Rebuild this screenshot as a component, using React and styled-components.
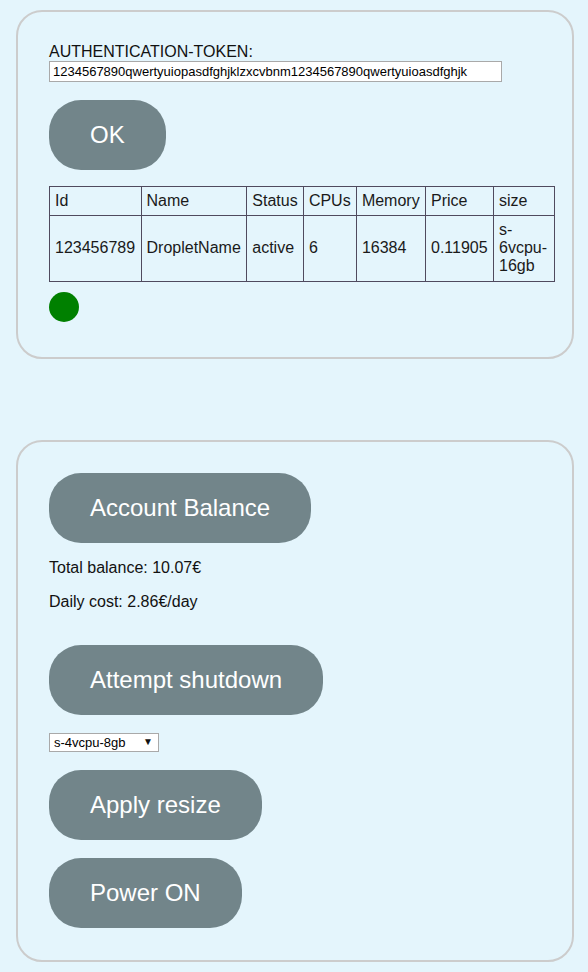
import React from "react";
import styled, { createGlobalStyle } from "styled-components";

const Global = createGlobalStyle`
  html, body { margin: 0; padding: 0; background: #e4f5fc; }
  body { font-family: "Liberation Sans", Arial, sans-serif; font-size: 16px; color: #000; }
`;

const Page = styled.div`
  display: flex;
  flex-direction: column;
  gap: 81px;
  padding: 10px 14px 10px 16px;
`;

const Card = styled.section`
  box-sizing: border-box;
  width: 558px;
  border: 2px solid #cccccc;
  border-radius: 26px;
  background: #e4f5fc;
  padding: 31px 17px ${(p) => p.$bottom || 32}px 31px;
  display: flex;
  flex-direction: column;
  align-items: flex-start;
`;

const Label = styled.div`
  font-size: 16px;
  line-height: 18px;
  color: #111;
`;

const TokenInput = styled.input`
  box-sizing: border-box;
  width: 453px;
  height: 21px;
  border: 1px solid #a9a9a9;
  background: #fff;
  font-family: "Liberation Sans", Arial, sans-serif;
  font-size: 13px;
  padding: 0 3px;
  color: #000;
  outline: none;
`;

const Button = styled.button`
  box-sizing: border-box;
  height: 70px;
  margin-top: ${(p) => p.$mt ?? 18}px;
  padding: 0 41px;
  border: none;
  border-radius: 32px;
  background: #72858a;
  color: #fff;
  font-family: "Liberation Sans", Arial, sans-serif;
  font-size: 24px;
  cursor: pointer;
`;

const Table = styled.table`
  margin-top: 16px;
  width: 506px;
  border-collapse: collapse;
  font-size: 16px;
  line-height: 18px;
  color: #1a1a1a;
`;

const Th = styled.th`
  border: 1px solid #4f4a5e;
  padding: 5px 5px;
  text-align: left;
  font-weight: normal;
`;

const Td = styled.td`
  border: 1px solid #4f4a5e;
  padding: 5px 5px 6px;
  text-align: left;
  vertical-align: middle;
  width: ${(p) => (p.$w ? `${p.$w}px` : "auto")};
`;

const Dot = styled.div`
  margin-top: 10px;
  width: 30px;
  height: 30px;
  border-radius: 50%;
  background: #008000;
`;

const Info = styled.p`
  margin: ${(p) => p.$mt}px 0 0;
  font-size: 16px;
  line-height: 18px;
  color: #111;
`;

const SelectWrap = styled.div`
  position: relative;
  margin-top: 18px;
  width: 110px;
  height: 19px;
`;

const Select = styled.select`
  box-sizing: border-box;
  width: 110px;
  height: 19px;
  border: 1px solid #a9a9a9;
  background: #fff;
  font-family: "Liberation Sans", Arial, sans-serif;
  font-size: 13px;
  padding: 0 0 0 4px;
  appearance: none;
  -webkit-appearance: none;
  border-radius: 0;
  color: #000;
  outline: none;
`;

const Arrow = styled.span`
  position: absolute;
  right: 6px;
  top: 3px;
  font-size: 10px;
  line-height: 12px;
  color: #111;
  pointer-events: none;
`;

const headers = ["Id", "Name", "Status", "CPUs", "Memory", "Price", "size"];
const row = ["123456789", "DropletName", "active", "6", "16384", "0.11905", "s-6vcpu-16gb"];

export default function App() {
  return (
    <>
      <Global />
      <Page>
        <Card $bottom={35}>
          <Label>AUTHENTICATION-TOKEN:</Label>
          <TokenInput
            defaultValue="1234567890qwertyuiopasdfghjklzxcvbnm1234567890qwertyuioasdfghjk"
          />
          <Button>OK</Button>
          <Table>
            <thead>
              <tr>
                {headers.map((h) => (
                  <Th key={h}>{h}</Th>
                ))}
              </tr>
            </thead>
            <tbody>
              <tr>
                {row.map((c, i) => (
                  <Td key={i} $w={i === 6 ? 50 : 0}>{c}</Td>
                ))}
              </tr>
            </tbody>
          </Table>
          <Dot />
        </Card>
        <Card>
          <Button $mt={0}>Account Balance</Button>
          <Info $mt={16}>Total balance: 10.07€</Info>
          <Info $mt={16}>Daily cost: 2.86€/day</Info>
          <Button $mt={34}>Attempt shutdown</Button>
          <SelectWrap>
            <Select defaultValue="s-4vcpu-8gb">
              <option>s-4vcpu-8gb</option>
              <option>s-6vcpu-16gb</option>
            </Select>
            <Arrow>▼</Arrow>
          </SelectWrap>
          <Button>Apply resize</Button>
          <Button>Power ON</Button>
        </Card>
      </Page>
    </>
  );
}
